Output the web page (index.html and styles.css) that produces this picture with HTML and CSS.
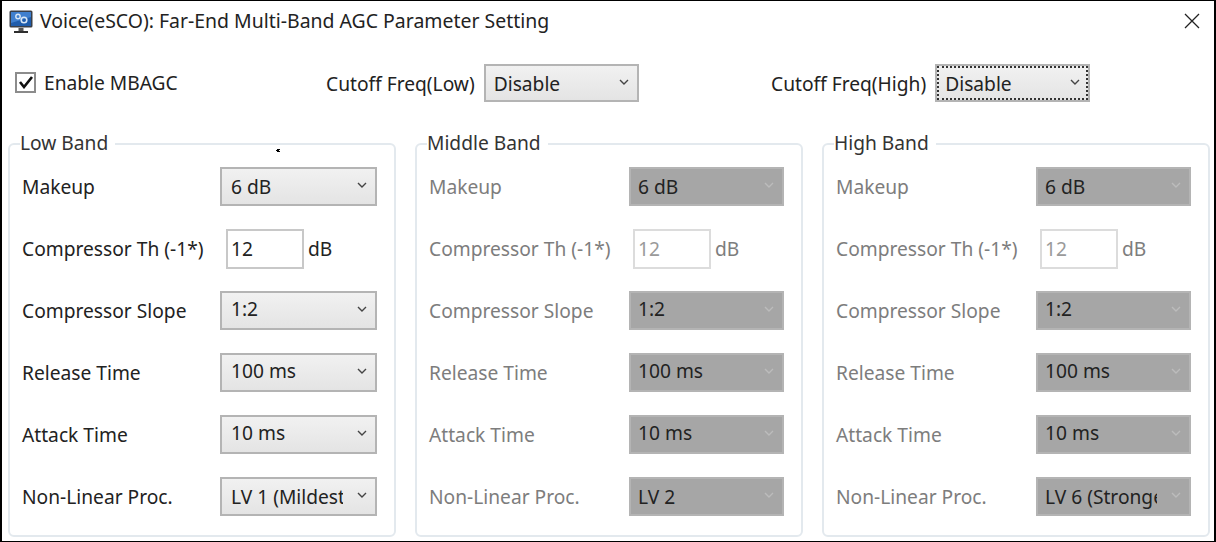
FILE: index.html
```html
<!DOCTYPE html>
<html lang="en">
<head>
  <meta charset="UTF-8" />
  <title>Voice(eSCO): Far-End Multi-Band AGC Parameter Setting</title>
  <link rel="stylesheet" href="styles.css">
</head>
<body>
  <div class="dialog">
    <div class="title-bar">
      <svg class="app-icon" width="24" height="24" viewBox="0 0 24 24">
        <rect x="0.5" y="0.5" width="23" height="17" rx="1.5" fill="#3a3f48"/>
        <rect x="2" y="2" width="20" height="14" fill="#1f5cab"/>
        <path d="M2 2h20v5L2 13z" fill="#3f7fce"/>
        <circle cx="9" cy="6.5" r="2.2" fill="none" stroke="#d8e6f5" stroke-width="1.4"/>
        <circle cx="15" cy="10" r="2.8" fill="none" stroke="#d8e6f5" stroke-width="1.6"/>
        <rect x="9.5" y="18" width="5" height="3" fill="#555"/>
        <rect x="5" y="21" width="14" height="2" fill="#2e2e2e"/>
      </svg>
      <span class="title-text">Voice(eSCO): Far-End Multi-Band AGC Parameter Setting</span>
      <svg class="close-icon" width="16" height="16" viewBox="0 0 16 16">
        <path d="M1 1l14 14M15 1L1 15" stroke="#222" stroke-width="1.3" fill="none"/>
      </svg>
    </div>

    <div class="top-row">
      <label class="enable">
        <span class="check">
          <svg width="16" height="14" viewBox="0 0 16 14"><path d="M2 7l4 5 8-10" stroke="#111" stroke-width="2.6" fill="none"/></svg>
        </span>
        Enable MBAGC
      </label>
      <div class="cutoff">
        <span>Cutoff Freq(Low)</span>
        <div class="combo combo-top"><span class="combo-text">Disable</span><svg class="chevron" width="10" height="6" viewBox="0 0 10 6"><path d="M1 1l4 4 4-4" fill="none" stroke="currentColor" stroke-width="1.4"/></svg></div>
      </div>
      <div class="cutoff">
        <span>Cutoff Freq(High)</span>
        <div class="combo combo-top focused"><span class="combo-text">Disable</span><svg class="chevron" width="10" height="6" viewBox="0 0 10 6"><path d="M1 1l4 4 4-4" fill="none" stroke="currentColor" stroke-width="1.4"/></svg></div>
      </div>
    </div>

    <div class="bands" id="bands"></div>
    <span class="speck"></span>
  </div>
  <script>
    // Band panels share the same rows, only the last value differs
    const bands = [
      { name: "Low Band", nlp: "LV 1 (Mildest)", disabled: false },
      { name: "Middle Band", nlp: "LV 2", disabled: true },
      { name: "High Band", nlp: "LV 6 (Strongest)", disabled: true }
    ];
    const chevron = '<svg class="chevron" width="10" height="6" viewBox="0 0 10 6"><path d="M1 1l4 4 4-4" fill="none" stroke="currentColor" stroke-width="1.4"/></svg>';

    function comboRow(label, value, raised) {
      return `
        <div class="row">
          <span class="row-label">${label}</span>
          <div class="combo ${raised ? 'raised' : ''}"><span class="combo-text">${value}</span>${chevron}</div>
        </div>`;
    }

    const bandsDiv = document.getElementById('bands');
    bands.forEach(band => {
      const box = document.createElement('fieldset');
      box.className = band.disabled ? 'band disabled' : 'band';
      box.innerHTML = `
        <legend>${band.name}</legend>
        ${comboRow('Makeup', '6 dB')}
        <div class="row">
          <span class="row-label">Compressor Th (-1*)</span>
          <div class="th-value"><span class="th-input">12</span><span>dB</span></div>
        </div>
        ${comboRow('Compressor Slope', '1:2', true)}
        ${comboRow('Release Time', '100 ms', true)}
        ${comboRow('Attack Time', '10 ms', true)}
        ${comboRow('Non-Linear Proc.', band.nlp)}
      `;
      bandsDiv.appendChild(box);
    });
  </script>
</body>
</html>
```

FILE: styles.css
```css
html, body { margin: 0; height: 100%; }
body { font-family: "Noto Sans", "Open Sans", sans-serif; font-size: 19.2px; color: #222; background: #fff; overflow: hidden; }
.dialog {
  box-sizing: border-box;
  position: relative;
  width: 1216px;
  height: 542px;
  border: 2px solid #000;
  border-bottom-width: 1px;
  border-top-width: 1px;
  background: #fff;
}
.title-bar {
  display: flex;
  align-items: center;
  height: 41px;
  padding: 0 14px 0 7px;
}
.app-icon { flex: none; margin-right: 7px; }
.title-text { flex: 1; font-size: 19.45px; margin-top: -2px; }
.close-icon { flex: none; margin-top: -2px; }
.top-row {
  display: grid;
  grid-template-columns: 311px 445px auto;
  align-items: center;
  height: 40px;
  margin-top: 21px;
  padding-left: 13px;
}
.enable { display: flex; align-items: center; gap: 8px; margin-top: -2px; }
.check {
  box-sizing: border-box;
  display: flex;
  align-items: center;
  justify-content: center;
  width: 21px;
  height: 21px;
  border: 2px solid #8c8c8c;
  background: #fff;
}
.cutoff { display: flex; align-items: center; gap: 9px; }
.combo {
  box-sizing: border-box;
  position: relative;
  display: flex;
  align-items: center;
  width: 157px;
  height: 39px;
  padding: 0 32px 0 9px;
  border: 2px solid #b4b4b4;
  background: linear-gradient(180deg, #f1f1f1 0%, #e4e4e4 100%);
  color: #222;
}
.combo.raised { padding-bottom: 5px; }
.combo-top { width: 155px; height: 38px; padding-left: 8px; }
.combo-top.focused { outline: 2px dotted #333; outline-offset: -4px; }
.combo-text { white-space: nowrap; overflow: hidden; flex: 1; }
.chevron { position: absolute; right: 8px; top: 13px; color: #444; }
.bands {
  display: grid;
  grid-template-columns: repeat(3, 388px);
  column-gap: 19px;
  margin: 29px 0 0 6px;
}
.band {
  box-sizing: border-box;
  height: 405px;
  margin: 0;
  min-width: 0;
  padding: 11px 17px 0 12px;
  border: 2px solid #e3e9ee;
  border-radius: 6px;
}
.band legend { margin-left: -2px; padding: 0 7px 2px 0; line-height: 22px; color: #333; }
.row {
  display: flex;
  align-items: center;
  justify-content: space-between;
  height: 39px;
  margin-bottom: 23px;
}
.th-value { display: flex; align-items: center; gap: 4px; width: 151px; }
.th-input {
  box-sizing: border-box;
  display: block;
  width: 78px;
  height: 40px;
  padding: 6px 0 0 3px;
  border: 2px solid #c8c8c8;
  line-height: 24px;
}
.band.disabled .row-label, .band.disabled .th-value { color: #7d7d7d; }
.band.disabled .th-input { color: #9a9a9a; border-color: #dcdcdc; }
.band.disabled .combo { width: 155px; background: #a6a6a6; border-color: #b4b4b4; padding-left: 7px; }
.band.disabled .chevron { color: #bcbcbc; }
/* tiny mark that sits over the first panel */
.speck { position: absolute; left: 274px; top: 149px; width: 3px; height: 1px; background: #000; box-shadow: 1px -1px 0 0 #000, 1px 1px 0 0 #000; }
```
